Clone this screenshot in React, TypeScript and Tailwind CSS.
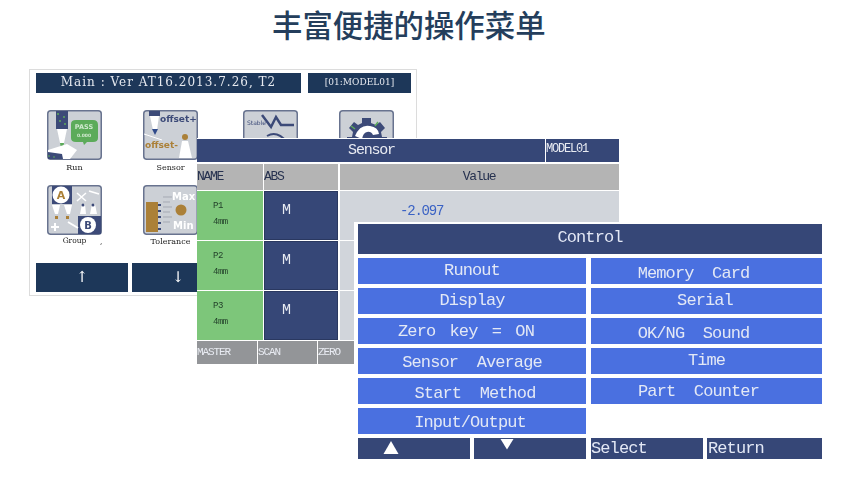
const mono = "font-['Liberation_Mono','Noto_Sans_CJK_SC',monospace]";
const serif = "font-['DejaVu_Serif',serif]";

function IconFrame({ children }: { children: React.ReactNode }) {
  return (
    <svg viewBox="0 0 55 50" className="w-[55px] h-[50px] block">
      <rect x="0.75" y="0.75" width="53.5" height="48.5" rx="3" fill="#ccd0d6" stroke="#68738f" strokeWidth="1.5" />
      {children}
    </svg>
  );
}

function RunIcon() {
  return (
    <IconFrame>
      <rect x="9" y="1" width="12" height="18" fill="#3c4a78" />
      <path d="M10 4h2M16 7h2M12 11h2M17 14h2" stroke="#5cab5a" strokeWidth="1.5" />
      <path d="M10 19h10l-3 14h-4z" fill="#fff" />
      <path d="M13 33h4l-1 5h-2z" fill="#5cab5a" />
      <path d="M1 40l19-6 10 6-7 9H1z" fill="#fff" />
      <path d="M1 42l14 2 1 5H1z" fill="#3c4a78" />
      <path d="M1 46h2M6 47h2" stroke="#5cab5a" strokeWidth="1" />
      <path d="M24 14q0-4 5-4h17q5 0 5 5v13q0 4-5 4h-6l-3 3-1-3H29q-5 0-5-4z" fill="#5cab5a" />
      <text x="37" y="19" textAnchor="middle" fontSize="6.5" fontFamily="DejaVu Sans" fontWeight="700" fill="#cfe8ce">PASS</text>
      <text x="37" y="27" textAnchor="middle" fontSize="4.5" fontFamily="DejaVu Sans" fontWeight="700" fill="#cfe8ce">0.000</text>
    </IconFrame>
  );
}

function SensorIcon() {
  return (
    <IconFrame>
      <rect x="6" y="1" width="11" height="5" fill="#3c4a78" />
      <path d="M7 6h9l-2 14H10z" fill="#fff" />
      <path d="M9 19h6l-3 6z" fill="#2f4a8a" />
      <text x="17" y="12" fontSize="9" fontFamily="DejaVu Sans" fontWeight="700" fill="#3c4a78">offset+</text>
      <text x="2" y="38" fontSize="9" fontFamily="DejaVu Sans" fontWeight="700" fill="#ab8038">offset-</text>
      <path d="M1 24l18 6" stroke="#fff" strokeWidth="1" />
      <circle cx="42" cy="27" r="3" fill="#ab8038" />
      <path d="M39 31h6l4 17H36z" fill="#fff" />
    </IconFrame>
  );
}

function WaveIcon() {
  return (
    <IconFrame>
      <text x="4" y="15" fontSize="6" fontFamily="DejaVu Sans" fill="#3c4a78">Stable</text>
      <path d="M19 5l9 12 5-10 5 8h13" fill="none" stroke="#3c4a78" strokeWidth="2.5" />
      <path d="M24 26q10-6 20 6" fill="none" stroke="#3c4a78" strokeWidth="2" />
    </IconFrame>
  );
}

function GearIcon() {
  return (
    <IconFrame>
      <path d="M23 8h9v5l5 2 4-3 5 6-4 4 1 5h5v9H8v-9h5l1-5-4-4 5-6 4 3 4-2z" fill="#3c4a78" />
      <path d="M16 26q5-12 15-10 8 1 9 8l-6 1q-2-4-6-3-4 1-5 7z" fill="#fff" />
      <path d="M12 16l4 3M39 12l-3 4" stroke="#5cab5a" strokeWidth="1.5" />
    </IconFrame>
  );
}

function GroupIcon() {
  return (
    <IconFrame>
      <rect x="5" y="1" width="20" height="18" fill="#3c4a78" />
      <circle cx="14" cy="10" r="8.5" fill="#fff" />
      <text x="14" y="14" textAnchor="middle" fontSize="11" fontFamily="DejaVu Sans" fontWeight="700" fill="#ab8038">A</text>
      <path d="M5 20h8l-2 9H8zM17 20h8l-2 9h-3z" fill="#fff" />
      <path d="M8 31h3v3H8zM19 31h3v3h-3z" fill="#ab8038" />
      <path d="M30 8l9 8M30 16l9-8M42 6l10 3" stroke="#fff" strokeWidth="1.5" />
      <path d="M35 19h3l1 10h-6zM45 19h3l2 10h-7z" fill="#fff" />
      <circle cx="36" cy="20" r="1.5" fill="#3c4a78" />
      <circle cx="46" cy="20" r="1.5" fill="#3c4a78" />
      <rect x="31" y="31" width="23" height="18" fill="#3c4a78" />
      <circle cx="41" cy="40" r="8" fill="#fff" />
      <text x="41" y="44" textAnchor="middle" fontSize="10" fontFamily="DejaVu Sans" fontWeight="700" fill="#3c4a78">B</text>
      <path d="M8 38v8M4 42h8M21 37l10 6" stroke="#fff" strokeWidth="2" />
    </IconFrame>
  );
}

function ToleranceIcon() {
  return (
    <IconFrame>
      <rect x="3" y="17" width="12" height="30" fill="#ab8038" />
      <path d="M15 20h3M15 26h3M15 32h3M15 38h3M15 44h3" stroke="#3c4a78" strokeWidth="2" />
      <path d="M20 12h9M20 17h7M20 22h9M20 27h7M20 32h9M20 37h7" stroke="#a5a9b3" strokeWidth="1" />
      <text x="29" y="15" fontSize="10" fontFamily="DejaVu Sans" fontWeight="700" fill="#fff">Max</text>
      <circle cx="38" cy="25" r="5.5" fill="#ab8038" />
      <text x="30" y="44" fontSize="10" fontFamily="DejaVu Sans" fontWeight="700" fill="#fff">Min</text>
    </IconFrame>
  );
}

function MainWindow() {
  return (
    <div className={`absolute left-[29px] top-[69px] w-[388px] h-[227px] bg-white border border-[#dcdcdc] blur-[0.3px] ${serif}`}>
      <div className="flex gap-[7px] pl-[6px] pt-[3px]">
        <div className="w-[265px] h-[20px] bg-[#1d3759] text-[#e6e9ef] text-[12px] tracking-[1px] leading-[19px] text-center whitespace-pre">
          Main : Ver AT16.2013.7.26, T2
        </div>
        <div className="w-[103px] h-[20px] bg-[#1d3759] text-[#e6e9ef] text-[9px] leading-[19px] text-center">
          [01:MODEL01]
        </div>
      </div>
      <div className="flex pl-[17px] pt-[17px]">
        <div className="w-[96px]">
          <RunIcon />
          <p className="w-[55px] text-center text-[8px] leading-[10px] mt-[3px] text-[#222]">Run</p>
        </div>
        <div className="w-[100px]">
          <SensorIcon />
          <p className="w-[55px] text-center text-[8px] leading-[10px] mt-[3px] text-[#222]">Sensor</p>
        </div>
        <div className="w-[96px]"><WaveIcon /></div>
        <GearIcon />
      </div>
      <div className="flex pl-[17px] pt-[12px]">
        <div className="w-[96px]">
          <GroupIcon />
          <div className="flex text-[7.5px] leading-[10px] mt-[1px] text-[#222]">
            <p className="w-[55px] text-center">Group</p>
            <span className="ml-[-2px] pt-[1px]">,</span>
          </div>
        </div>
        <div>
          <ToleranceIcon />
          <p className="w-[55px] text-center text-[8px] leading-[10px] mt-[2px] text-[#222]">Tolerance</p>
        </div>
      </div>
      <div className="flex gap-[4px] pl-[6px] pt-[16px]">
        <div className="w-[92px] h-[29px] bg-[#1d3759] text-white text-[15px] leading-[28px] text-center">↑</div>
        <div className="w-[92px] h-[29px] bg-[#1d3759] text-white text-[15px] leading-[28px] text-center">↓</div>
      </div>
    </div>
  );
}

function SensorRow({ name }: { name: string }) {
  return (
    <div className="flex gap-[1px] h-[49px]">
      <div className="w-[66px] bg-[#7dc67a] pl-[16px] pt-[7px] text-[9px] tracking-[-0.5px] leading-[16px] text-[#23402a]">
        <p>{name}</p>
        <p>4mm</p>
      </div>
      <div className="w-[74px] bg-[#364777] border border-[#2a3860] pl-[17px] pt-[11px] text-[#e8ebf2] text-[15px] tracking-[-1px] leading-[16px]">
        M
      </div>
      <div className="w-[279px] bg-[#d1d5db] ml-[1px] pl-[60px] pt-[12px] text-[#3a62c4] text-[14px] tracking-[-1.2px] leading-[16px]">
        {name === "P1" ? "-2.097" : ""}
      </div>
    </div>
  );
}

function SensorWindow() {
  return (
    <div className={`absolute left-[197px] top-[138px] w-[422px] h-[226px] bg-white flex flex-col gap-[1px] pt-[1px] blur-[0.3px] ${mono}`}>
      <div className="flex gap-[1px] h-[23px] text-[#e8ebf2]">
        <div className="w-[348px] bg-[#364777] text-[15px] tracking-[-1.2px] leading-[23px] text-center pl-[1px]">Sensor</div>
        <div className="flex-1 bg-[#364777] text-[12px] tracking-[-1.2px] leading-[21px]">MODEL01</div>
      </div>
      <div className="flex gap-[1px] h-[26px] mt-[1px] text-[13px] tracking-[-1.3px] leading-[25px] text-[#26314f]">
        <div className="w-[66px] bg-[#b4b4b4]">NAME</div>
        <div className="w-[74px] bg-[#b4b4b4]">ABS</div>
        <div className="flex-1 ml-[1px] bg-[#b4b4b4] text-center pr-[1px]">Value</div>
      </div>
      <SensorRow name="P1" />
      <SensorRow name="P2" />
      <SensorRow name="P3" />
      <div className="flex gap-[1px] h-[23px] text-[11px] tracking-[-1.1px] leading-[22px] text-[#e8ebf2]">
        <div className="w-[60px] bg-[#939598]">MASTER</div>
        <div className="w-[59px] bg-[#939598]">SCAN</div>
        <div className="w-[36px] bg-[#939598]">ZERO</div>
      </div>
    </div>
  );
}

const leftItems = [
  { label: "Runout", cls: "pb-[1px]" },
  { label: "Display", cls: "pb-[1px]" },
  { label: "Zero key = ON", cls: "pt-[1px] pr-[12px] [word-spacing:5px]" },
  { label: "Sensor  Average", cls: "pt-[3px]" },
  { label: "Start  Method", cls: "pt-[6px] pl-[6px]" },
  { label: "Input/Output", cls: "pt-[4px] pr-[4px]" },
];

const rightItems = [
  { label: "Memory  Card", cls: "pt-[6px] pr-[26px]" },
  { label: "Serial", cls: "pb-[1px] pr-[3px]" },
  { label: "OK/NG  Sound", cls: "pt-[5px] pr-[26px]" },
  { label: "Time", cls: "pb-[0px]" },
  { label: "Part  Counter", cls: "pt-[2px] pr-[16px]" },
];

function MenuCell({ label, cls }: { label: string; cls: string }) {
  return (
    <div className={`h-[26px] bg-[#4a70e0] text-[#e3e8f5] flex items-center justify-center whitespace-pre ${cls}`}>
      {label}
    </div>
  );
}

function ControlWindow() {
  return (
    <div className={`absolute left-[354px] top-[222px] w-[473px] h-[242px] bg-white pl-[4px] pt-[2px] text-[17px] tracking-[-0.9px] blur-[0.3px] ${mono}`}>
      <div className="w-[464px] h-[30px] bg-[#364777] text-[#e3e8f5] text-center leading-[28px]">Control</div>
      <div className="flex gap-[5px] mt-[4px]">
        <div className="w-[228px] flex flex-col gap-[4px]">
          {leftItems.map((item) => (
            <MenuCell key={item.label} {...item} />
          ))}
        </div>
        <div className="w-[231px] flex flex-col gap-[4px]">
          {rightItems.map((item) => (
            <MenuCell key={item.label} {...item} />
          ))}
        </div>
      </div>
      <div className="flex gap-[4px] mt-[4px] h-[21px] text-[#e3e8f5] leading-[22px]">
        <div className="w-[112px] bg-[#364777] flex justify-start pl-[25px] pt-[2px]">
          <svg width="16" height="15" viewBox="0 0 16 15"><path d="M8 1l7.5 13H.5z" fill="#fff" /></svg>
        </div>
        <div className="w-[112px] bg-[#364777] flex justify-start pl-[26px]">
          <svg width="14" height="12" viewBox="0 0 14 12"><path d="M.5 1h13L7 11.5z" fill="#fff" /></svg>
        </div>
        <div className="w-[112px] ml-[1px] bg-[#364777]">Select</div>
        <div className="w-[115px] bg-[#364777] pl-[1px]">Return</div>
      </div>
    </div>
  );
}

export default function App() {
  return (
    <div className="relative w-[860px] h-[479px] bg-white overflow-hidden">
      <h1 className="pl-[272px] pt-[3px] text-[30.4px] leading-[42px] font-medium text-[#243e5c] font-['Noto_Sans_CJK_SC',sans-serif]">
        丰富便捷的操作菜单
      </h1>
      <MainWindow />
      <SensorWindow />
      <ControlWindow />
    </div>
  );
}
